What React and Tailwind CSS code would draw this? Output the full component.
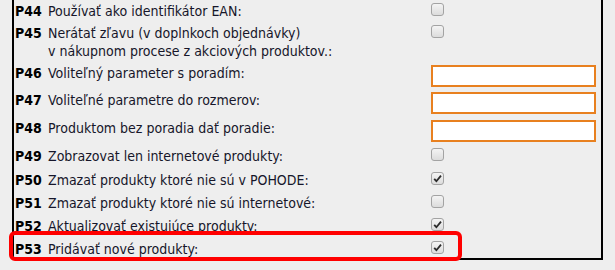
const rows = [
  { code: 'P44', label: 'Používať ako identifikátor EAN:', type: 'check', h: 22 },
  { code: 'P45', label: 'Nerátať zľavu (v doplnkoch objednávky)', label2: 'v nákupnom procese z akciových produktov.:', type: 'check', h: 40 },
  { code: 'P46', label: 'Voliteľný parameter s poradím:', type: 'input', h: 27 },
  { code: 'P47', label: 'Voliteľné parametre do rozmerov:', type: 'input', h: 28 },
  { code: 'P48', label: 'Produktom bez poradia dať poradie:', type: 'input', h: 28 },
  { code: 'P49', label: 'Zobrazovat len internetové produkty:', type: 'check', h: 24 },
  { code: 'P50', label: 'Zmazať produkty ktoré nie sú v POHODE:', type: 'check', checked: true, h: 23 },
  { code: 'P51', label: 'Zmazať produkty ktoré nie sú internetové:', type: 'check', h: 23 },
  { code: 'P52', label: 'Aktualizovať existujúce produkty:', type: 'check', checked: true, h: 23 },
  { code: 'P53', label: 'Pridávať nové produkty:', type: 'check', checked: true, h: 20 },
];

const Checkbox = ({ checked }) => (
  <div className="w-[13px] h-[13px] rounded-[3px] border border-[#a3a3a3] bg-gradient-to-b from-[#f4f4f4] to-[#dcdcdc] flex items-center justify-center">
    {checked && (
      <svg width="9" height="9" viewBox="0 0 9 9">
        <path d="M1.2 4.8 L3.4 7.2 L8 1.6" fill="none" stroke="#2b2b2b" strokeWidth="1.8" />
      </svg>
    )}
  </div>
);

export default function App() {
  return (
    <div className="w-[615px] h-[270px] bg-[#eeeeee] overflow-hidden relative" style={{ fontFamily: '"DejaVu Sans Condensed", "DejaVu Sans", sans-serif' }}>
      <div className="ml-[12px] w-[591px] h-[260px] border-2 border-t-0 border-black">
        {rows.map((r) => (
          <div key={r.code} className="flex" style={{ height: r.h }}>
            <div className="w-[417px] pl-[1px] text-[14px] leading-[18px] text-[#16162a] pt-[2px]">
              <div className="flex">
                <span className="font-bold w-[33px] text-black">{r.code}</span>
                <span>{r.label}</span>
              </div>
              {r.label2 && <div className="pl-[33px]">{r.label2}</div>}
            </div>
            <div className="pt-[3px]">
              {r.type === 'check' ? (
                <Checkbox checked={r.checked} />
              ) : (
                <div className="w-[165px] h-[22px] bg-white border-2 border-[#e8801f]" />
              )}
            </div>
          </div>
        ))}
      </div>
      <div className="absolute left-[9px] top-[231px] w-[453px] h-[30px] border-4 border-[#ff0000] rounded-[6px]" />
    </div>
  );
}
